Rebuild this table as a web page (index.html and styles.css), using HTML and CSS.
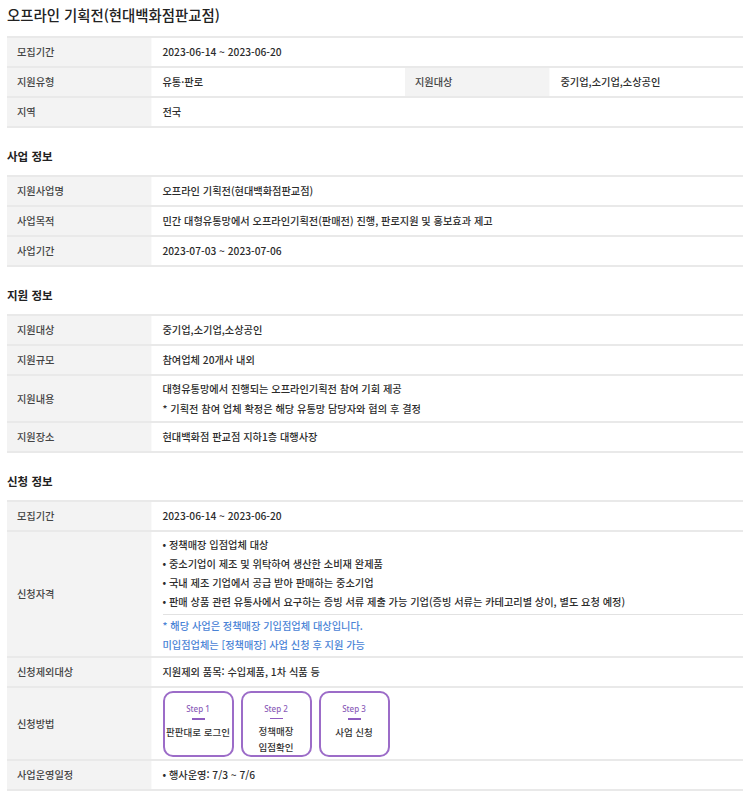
FILE: index.html
```html
<!DOCTYPE html>
<html lang="ko">
<head>
  <meta charset="UTF-8">
  <title>오프라인 기획전(현대백화점판교점)</title>
  <link rel="stylesheet" href="styles.css">
</head>
<body>
  <div class="page">
    <h1 class="page-title">오프라인 기획전(현대백화점판교점)</h1>

    <table class="info-table">
      <colgroup>
        <col class="col-label">
        <col class="col-value-half">
        <col class="col-label">
        <col>
      </colgroup>
      <tr>
        <th>모집기간</th>
        <td colspan="3">2023-06-14 ~ 2023-06-20</td>
      </tr>
      <tr>
        <th>지원유형</th>
        <td>유통·판로</td>
        <th>지원대상</th>
        <td>중기업,소기업,소상공인</td>
      </tr>
      <tr>
        <th>지역</th>
        <td colspan="3">전국</td>
      </tr>
    </table>

    <h2 class="section-title">사업 정보</h2>
    <table class="info-table">
      <colgroup>
        <col class="col-label">
        <col>
      </colgroup>
      <tr>
        <th>지원사업명</th>
        <td>오프라인 기획전(현대백화점판교점)</td>
      </tr>
      <tr>
        <th>사업목적</th>
        <td>민간 대형유통망에서 오프라인기획전(판매전) 진행, 판로지원 및 홍보효과 제고</td>
      </tr>
      <tr>
        <th>사업기간</th>
        <td>2023-07-03 ~ 2023-07-06</td>
      </tr>
    </table>

    <h2 class="section-title">지원 정보</h2>
    <table class="info-table">
      <colgroup>
        <col class="col-label">
        <col>
      </colgroup>
      <tr>
        <th>지원대상</th>
        <td>중기업,소기업,소상공인</td>
      </tr>
      <tr>
        <th>지원규모</th>
        <td>참여업체 20개사 내외</td>
      </tr>
      <tr>
        <th>지원내용</th>
        <td>대형유통망에서 진행되는 오프라인기획전 참여 기회 제공<br>* 기획전 참여 업체 확정은 해당 유통망 담당자와 협의 후 결정</td>
      </tr>
      <tr>
        <th>지원장소</th>
        <td>현대백화점 판교점 지하1층 대행사장</td>
      </tr>
    </table>

    <h2 class="section-title">신청 정보</h2>
    <table class="info-table">
      <colgroup>
        <col class="col-label">
        <col>
      </colgroup>
      <tr>
        <th>모집기간</th>
        <td>2023-06-14 ~ 2023-06-20</td>
      </tr>
      <tr>
        <th>신청자격</th>
        <td>
          <ul class="bullet-list with-line">
            <li>정책매장 입점업체 대상</li>
            <li>중소기업이 제조 및 위탁하여 생산한 소비재 완제품</li>
            <li>국내 제조 기업에서 공급 받아 판매하는 중소기업</li>
            <li>판매 상품 관련 유통사에서 요구하는 증빙 서류 제출 가능 기업(증빙 서류는 카테고리별 상이, 별도 요청 예정)</li>
          </ul>
          <p class="note">* 해당 사업은 정책매장 기입점업체 대상입니다.<br>미입점업체는 [정책매장] 사업 신청 후 지원 가능</p>
        </td>
      </tr>
      <tr>
        <th>신청제외대상</th>
        <td>지원제외 품목: 수입제품, 1차 식품 등</td>
      </tr>
      <tr>
        <th>신청방법</th>
        <td class="steps-cell">
          <div class="steps">
            <div class="step">
              <span class="step-no">Step 1</span>
              <span class="step-bar"></span>
              <span class="step-text">판판대로 로그인</span>
            </div>
            <div class="step">
              <span class="step-no">Step 2</span>
              <span class="step-bar"></span>
              <span class="step-text">정책매장<br>입점확인</span>
            </div>
            <div class="step">
              <span class="step-no">Step 3</span>
              <span class="step-bar"></span>
              <span class="step-text">사업 신청</span>
            </div>
          </div>
        </td>
      </tr>
      <tr>
        <th>사업운영일정</th>
        <td>
          <ul class="bullet-list">
            <li>행사운영: 7/3 ~ 7/6</li>
          </ul>
        </td>
      </tr>
    </table>
  </div>
</body>
</html>
```

FILE: styles.css
```css
body {
  margin: 0;
  padding: 0;
  background: #fff;
  font-family: "Noto Sans CJK KR", "Noto Sans", sans-serif;
  color: #333;
}
.page {
  padding: 0 0 10px 7px;
}
.page-title {
  margin: 0;
  padding-top: 5px;
  font-size: 14.4px;
  font-weight: 500;
  line-height: 20px;
  color: #222;
}
.section-title {
  margin: 0;
  padding: 20px 0 10px;
  font-size: 11.5px;
  font-weight: bold;
  line-height: 17px;
  color: #222;
}
.info-table {
  width: 100%;
  border-collapse: collapse;
  font-size: 10.2px;
  font-weight: 500;
  line-height: 20px;
  margin-top: 11px;
}
.section-title + .info-table {
  margin-top: 0;
}
.col-label {
  width: 144px;
}
.col-value-half {
  width: 254px;
}
.info-table th,
.info-table td {
  height: 23px;
  border-top: 2px solid #e9e9e9;
  border-bottom: 2px solid #e9e9e9;
  padding: 2.5px 10px;
  text-align: left;
  vertical-align: middle;
}
.info-table th {
  background: #f3f3f3;
  font-weight: 500;
  color: #444;
  border-right: 1px solid #fafafa;
}
.info-table td {
  padding-left: 11px;
  color: #2b2b2b;
}
.bullet-list {
  list-style: none;
  margin: 0;
  padding: 0;
}
.bullet-list li::before {
  content: "• ";
}
.bullet-list.with-line {
  line-height: 19px;
  padding-bottom: 3px;
  border-bottom: 1px solid #e2e2e2;
  margin-right: -10px;
}
.note {
  margin: 0;
  padding-top: 1px;
  line-height: 19px;
  color: #4a83d6;
}
.steps-cell {
  padding-top: 2.5px;
  padding-bottom: 3px;
}
.steps {
  display: flex;
  gap: 7px;
}
.step {
  width: 67px;
  height: 52px;
  padding-top: 10px;
  border: 2px solid #9c6cc8;
  border-radius: 10px;
  display: flex;
  flex-direction: column;
  align-items: center;
}
.step-no {
  font-family: "Noto Sans", sans-serif;
  font-size: 8px;
  line-height: 12px;
  color: #8a5cb8;
}
.step-bar {
  width: 13px;
  height: 2px;
  background: #8f5dc0;
  margin: 3px 0 4px;
}
.step-text {
  font-size: 9.5px;
  line-height: 16px;
  text-align: center;
  color: #333;
}
```
